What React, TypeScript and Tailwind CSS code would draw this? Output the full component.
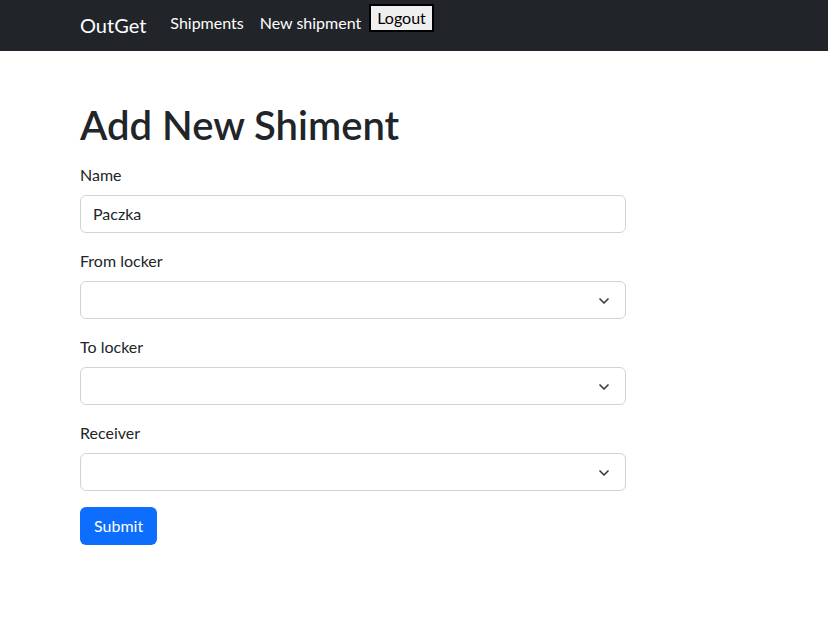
import { ChevronDown } from "lucide-react";

const fields = ["From locker", "To locker", "Receiver"];

const Select = ({ label }: { label: string }) => (
  <div className="mb-4">
    <label className="mb-2 block leading-6">{label}</label>
    <div className="relative h-[38px] w-full rounded-md border border-[#ced4da] bg-white">
      <ChevronDown
        className="absolute right-[13px] top-[11px] h-4 w-4 text-[#343a40]"
        strokeWidth={2.5}
      />
    </div>
  </div>
);

const App = () => {
  return (
    <div
      className="min-h-[619px] bg-white text-[#212529]"
      style={{ fontFamily: 'Lato, sans-serif' }}
    >
      {/* NAVBAR */}
      <nav className="flex h-[51px] items-start bg-[#212529] pl-[80px]">
        <a className="mr-4 mt-[10px] text-xl leading-[30px] text-white">OutGet</a>
        <a className="mt-[11px] px-2 leading-6 text-white">Shipments</a>
        <a className="mt-[11px] px-2 leading-6 text-white">New shipment</a>
        <button className="mt-[4px] h-[28px] border-2 border-black bg-[#efefef] px-[6px] leading-6 text-black">
          Logout
        </button>
      </nav>

      {/* FORM */}
      <div className="ml-[80px] w-[546px] pt-[56px]">
        <h1 className="mb-[20px] text-[40px] font-semibold leading-[36px]">Add New Shiment</h1>
        <div className="mb-4">
          <label className="mb-2 block leading-6">Name</label>
          <div className="flex h-[38px] w-full items-center rounded-md border border-[#ced4da] px-3">
            Paczka
          </div>
        </div>
        {fields.map((f) => (
          <Select key={f} label={f} />
        ))}
        <button className="h-[38px] rounded-md bg-[#0d6efd] px-[14px] leading-6 text-white">
          Submit
        </button>
      </div>
    </div>
  );
};

export default App;
